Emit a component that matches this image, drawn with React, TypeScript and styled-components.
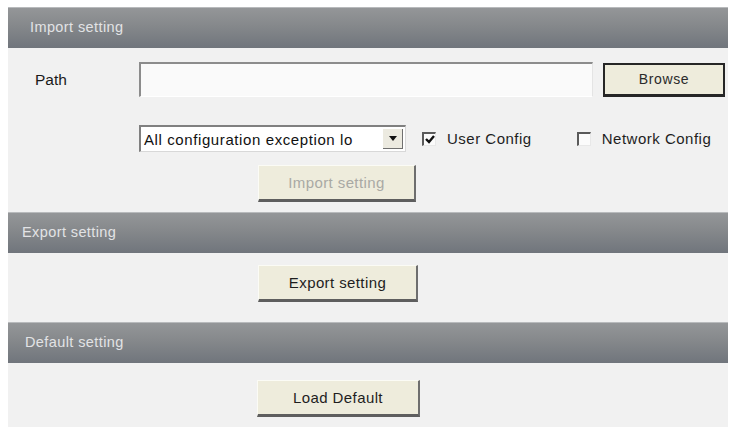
import React from "react";
import styled, { createGlobalStyle } from "styled-components";

const Global = createGlobalStyle`
  html, body { margin: 0; padding: 0; background: #ffffff; }
  body { font-family: "Liberation Sans", Arial, sans-serif; }
`;

const Page = styled.div`
  width: 737px;
  height: 432px;
  padding: 7px 0 0 8px;
  box-sizing: border-box;
`;

const Panel = styled.div`
  width: 720px;
  height: 420px;
  background: #f1f1f1;
  display: flex;
  flex-direction: column;
`;

const Header = styled.div<{ $indent: number }>`
  height: 41px;
  flex: none;
  display: flex;
  align-items: center;
  padding: 0 0 3px ${(p) => p.$indent}px;
  box-sizing: border-box;
  background: linear-gradient(#949698 0%, #85888b 45%, #70757c 100%);
  border-top: 1px solid #b8babc;
  color: #e2e3e5;
  font-size: 14.5px;
  letter-spacing: 0.4px;
`;

const Section = styled.div<{ $h: number; $top: number }>`
  height: ${(p) => p.$h}px;
  flex: none;
  box-sizing: border-box;
  padding-top: ${(p) => p.$top}px;
  display: flex;
  flex-direction: column;
`;

const Row = styled.div<{ $mt?: number }>`
  display: flex;
  align-items: center;
  margin-top: ${(p) => p.$mt ?? 0}px;
`;

const Label = styled.div`
  width: 131px;
  padding-left: 27px;
  box-sizing: border-box;
  font-size: 15.5px;
  color: #1a1a1a;
`;

const TextBox = styled.div`
  width: 454px;
  height: 35px;
  box-sizing: border-box;
  background: #fafafa;
  border-top: 2px solid #8c8c8c;
  border-left: 2px solid #8c8c8c;
  border-right: 1px solid #e4e4e4;
  border-bottom: 1px solid #ffffff;
`;

const Button = styled.div<{ $w: number; $h: number; $disabled?: boolean; $default?: boolean }>`
  width: ${(p) => p.$w}px;
  height: ${(p) => p.$h}px;
  box-sizing: border-box;
  display: flex;
  align-items: center;
  justify-content: center;
  background: #eeecdc;
  font-size: 15px;
  letter-spacing: 0.4px;
  color: ${(p) => (p.$disabled ? "#a9a9a4" : "#1e1e1e")};
  border-top: 1px solid #fbfbf5;
  border-left: 1px solid #fbfbf5;
  border-right: 2px solid #6e6e6e;
  border-bottom: 3px solid #5e5e5e;
  ${(p) =>
    p.$default &&
    `border: 2px solid #262626; border-bottom-width: 3px; color: #2a2a2a; font-size: 14px; letter-spacing: 0.6px;`}
`;

const Indent = styled.div<{ $w: number }>`
  width: ${(p) => p.$w}px;
  flex: none;
`;

const Select = styled.div`
  width: 267px;
  height: 27px;
  box-sizing: border-box;
  display: flex;
  align-items: center;
  background: #ffffff;
  border-top: 2px solid #808080;
  border-left: 2px solid #808080;
  border-right: 1px solid #d8d8d8;
  border-bottom: 1px solid #d8d8d8;
  font-size: 15px;
  letter-spacing: 0.6px;
  color: #111;
`;

const SelectText = styled.div`
  flex: 1;
  padding-left: 3px;
  white-space: nowrap;
  overflow: hidden;
`;

const Arrow = styled.div`
  width: 20px;
  height: 20px;
  margin-right: 2px;
  box-sizing: border-box;
  background: #eceae0;
  border-right: 1px solid #707070;
  border-bottom: 1px solid #707070;
  display: flex;
  align-items: center;
  justify-content: center;
`;

const Check = styled.div<{ $ml: number }>`
  display: flex;
  align-items: center;
  margin-left: ${(p) => p.$ml}px;
  font-size: 15px;
  letter-spacing: 0.5px;
  color: #1e1e1e;
`;

const Box = styled.div`
  width: 14px;
  height: 14px;
  box-sizing: border-box;
  background: #fbfbfb;
  border-top: 2px solid #5a5a5a;
  border-left: 2px solid #5a5a5a;
  border-right: 1px solid #e8e8e8;
  border-bottom: 1px solid #e8e8e8;
  margin-right: 11px;
  display: flex;
  align-items: center;
  justify-content: center;
`;

function CheckBox({ checked, label, ml }: { checked: boolean; label: string; ml: number }) {
  return (
    <Check $ml={ml}>
      <Box>
        {checked && (
          <svg width="10" height="9" viewBox="0 0 10 9">
            <path d="M1 4 L4 7 L9 1" stroke="#111" strokeWidth="2.4" fill="none" />
          </svg>
        )}
      </Box>
      {label}
    </Check>
  );
}

export default function App() {
  return (
    <Page>
      <Global />
      <Panel>
        <Header $indent={22}>Import setting</Header>
        <Section $h={164} $top={14}>
          <Row>
            <Label>Path</Label>
            <TextBox />
            <Indent $w={10} />
            <Button $w={122} $h={34} $default>
              Browse
            </Button>
          </Row>
          <Row $mt={28}>
            <Indent $w={131} />
            <Select>
              <SelectText>All configuration exception lo</SelectText>
              <Arrow>
                <svg width="8" height="5" viewBox="0 0 8 5">
                  <path d="M0 0 H8 L4 5 Z" fill="#111" />
                </svg>
              </Arrow>
            </Select>
            <CheckBox checked ml={16} label="User Config" />
            <CheckBox checked={false} ml={45} label="Network Config" />
          </Row>
          <Row $mt={13}>
            <Indent $w={250} />
            <Button $w={158} $h={37} $disabled>
              Import setting
            </Button>
          </Row>
        </Section>
        <Header $indent={14}>Export setting</Header>
        <Section $h={69} $top={12}>
          <Row>
            <Indent $w={250} />
            <Button $w={160} $h={37}>
              Export setting
            </Button>
          </Row>
        </Section>
        <Header $indent={17}>Default setting</Header>
        <Section $h={64} $top={17}>
          <Row>
            <Indent $w={249} />
            <Button $w={163} $h={37}>
              Load Default
            </Button>
          </Row>
        </Section>
      </Panel>
    </Page>
  );
}
